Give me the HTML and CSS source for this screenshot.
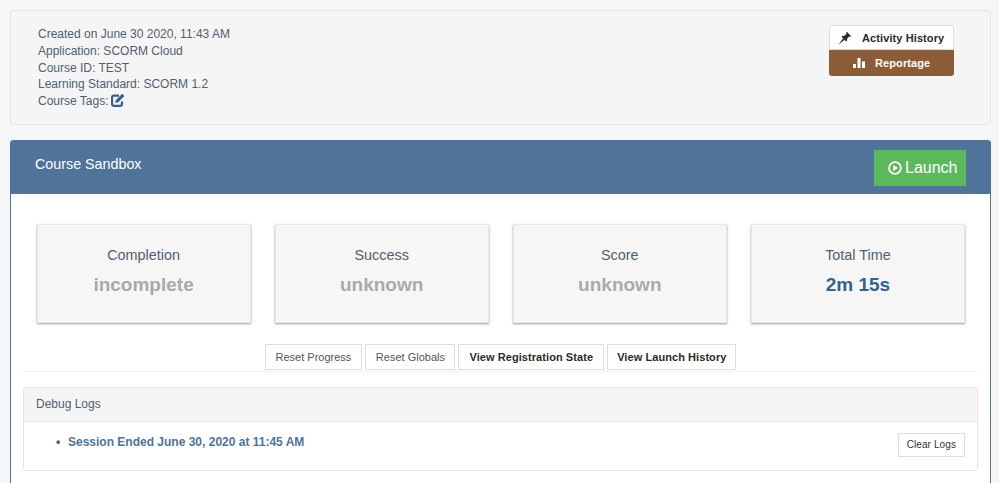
FILE: index.html
```html
<!DOCTYPE html>
<html lang="en">

<head>
    <meta charset="UTF-8">
    <title>Course Sandbox</title>
    <link rel="stylesheet" href="styles.css">
</head>

<body>
    <div class="well">
        <div class="course-info">
            <div>Created on June 30 2020, 11:43 AM</div>
            <div>Application: SCORM Cloud</div>
            <div>Course ID: TEST</div>
            <div>Learning Standard: SCORM 1.2</div>
            <div>Course Tags:
                <svg class="tag-icon" viewBox="0 0 14 14" width="14" height="14">
                    <path d="M11 8.500V11a1.800 1.800 0 0 1-1.800 1.800H2.800A1.800 1.800 0 0 1 1 11V4.500a1.800 1.800 0 0 1 1.800-1.800H8" fill="none" stroke="#34618e" stroke-width="2.300"/>
                    <path d="M4.800 7.200 11.200.8l2.200 2.200L7 9.400l-2.600.4z" fill="#34618e"/>
                </svg>
            </div>
        </div>
        <div class="side-actions">
            <a class="side-btn side-btn-white">
                <svg class="side-icon" viewBox="0 0 14 14" width="14" height="14">
                    <path d="M8.800.8 13.200 5.200 12.400 5.800 11.200 5.500 9.200 7.500 9 9.800 8.200 10.500 3.500 5.800 4.200 5 6.500 4.800 8.500 2.800 8.200 1.600zM.8 13.200 5 7.500 6.500 9z" fill="#2a2a2a"/>
                </svg>
                Activity History
            </a>
            <a class="side-btn side-btn-brown">
                <svg class="side-icon" viewBox="0 0 12 12" width="12" height="12">
                    <path d="M0 7h3v4H0zM4.500 1h3v10h-3zM9 4.500h3V11H9z" fill="#fff"/>
                </svg>
                Reportage
            </a>
        </div>
    </div>

    <div class="panel">
        <div class="panel-head">
            <h2>Course Sandbox</h2>
            <a class="launch-btn">
                <svg viewBox="0 0 14 14" width="14" height="14">
                    <circle cx="7" cy="7" r="5.900" fill="none" stroke="#fff" stroke-width="1.800"/>
                    <path d="M5.200 3.900 10 7l-4.800 3.100z" fill="#fff"/>
                </svg>
                Launch
            </a>
        </div>
        <div class="panel-body">
            <div class="stats">
                <div class="stat">
                    <div class="stat-label">Completion</div>
                    <div class="stat-value">incomplete</div>
                </div>
                <div class="stat">
                    <div class="stat-label">Success</div>
                    <div class="stat-value">unknown</div>
                </div>
                <div class="stat">
                    <div class="stat-label">Score</div>
                    <div class="stat-value">unknown</div>
                </div>
                <div class="stat">
                    <div class="stat-label">Total Time</div>
                    <div class="stat-value stat-value-blue">2m 15s</div>
                </div>
            </div>

            <div class="actions">
                <a class="btn">Reset Progress</a>
                <a class="btn btn-globals">Reset Globals</a>
                <a class="btn btn-bold">View Registration State</a>
                <a class="btn btn-bold btn-history">View Launch History</a>
            </div>

            <div class="logs">
                <div class="logs-head">Debug Logs</div>
                <div class="logs-body">
                    <ul>
                        <li>Session Ended June 30, 2020 at 11:45 AM</li>
                    </ul>
                    <a class="btn btn-clear">Clear Logs</a>
                </div>
            </div>
        </div>
    </div>
</body>

</html>
```

FILE: styles.css
```css
html,
body {
    height: 483px;
    overflow: hidden;
}

body {
    font-family: "Liberation Sans", Arial, sans-serif;
    font-size: 12px;
    background-color: #f4f6f8;
    margin: 0;
    padding: 10px 8px 0 10px;
    box-sizing: border-box;
    color: #4f5f70;
}

.well {
    display: flex;
    justify-content: space-between;
    height: 115px;
    box-sizing: border-box;
    padding: 14px 36px 0 27px;
    background-color: #f5f5f5;
    border: 1px solid #e6e6e6;
    border-radius: 3px;
}

.course-info {
    padding-top: 1px;
    line-height: 16.75px;
}

.tag-icon {
    vertical-align: -2px;
    margin-left: -1px;
}

.side-actions {
    width: 125px;
}

.side-btn {
    display: flex;
    align-items: center;
    font-weight: bold;
    font-size: 11px;
    letter-spacing: 0.1px;
}

.side-btn-white {
    height: 25px;
    box-sizing: border-box;
    background-color: white;
    color: #2a2a2a;
    border: 1px solid #ddd;
    border-radius: 3px 3px 0 0;
    padding-left: 8px;
}

.side-btn-white .side-icon {
    margin-right: 10px;
}

.side-btn-brown {
    height: 26px;
    background-color: #8c5c36;
    color: white;
    border-radius: 0 0 3px 3px;
    padding-left: 24px;
}

.side-btn-brown .side-icon {
    margin-right: 10px;
}

.panel {
    margin-top: 15px;
    background-color: white;
    border: 1px solid #4f7399;
    border-top: none;
    border-bottom: none;
    border-radius: 4px 4px 0 0;
    height: 343px;
}

.panel-head {
    display: flex;
    justify-content: space-between;
    align-items: center;
    height: 54px;
    margin: 0 -1px;
    padding: 0 25px 0 25px;
    box-sizing: border-box;
    background-color: #4f7399;
    border-radius: 4px 4px 0 0;
}

.panel-head h2 {
    margin: -6px 0 0 0;
    font-size: 14.3px;
    font-weight: normal;
    color: white;
}

.launch-btn {
    display: flex;
    align-items: center;
    gap: 3px;
    width: 92px;
    height: 36px;
    margin-top: 1px;
    box-sizing: border-box;
    padding-left: 14px;
    background-color: #5cb85c;
    color: white;
    font-size: 16px;
}

.panel-body {
    padding: 30px 12px 0 12px;
}

.stats {
    display: grid;
    grid-template-columns: repeat(4, 1fr);
    gap: 24px;
    padding: 0 13px 0 13.5px;
}

.stat {
    height: 99px;
    box-sizing: border-box;
    padding-top: 21px;
    text-align: center;
    background-color: #f6f6f6;
    border: 1px solid #e8e8e8;
    box-shadow: 0 1px 2px rgba(0, 0, 0, 0.4);
}

.stat-label {
    font-size: 14.4px;
    line-height: 18px;
}

.stat-value {
    margin-top: 9px;
    font-size: 19px;
    line-height: 24px;
    font-weight: bold;
    color: #aaa;
}

.stat-value-blue {
    color: #34618e;
}

.actions {
    display: flex;
    justify-content: center;
    gap: 3px;
    margin-top: 21px;
    padding: 0 0 1px 0;
    border-bottom: 1px solid #f2f2f2;
}

.btn {
    display: block;
    height: 26px;
    box-sizing: border-box;
    padding: 0 10px;
    line-height: 24px;
    font-size: 11px;
    background-color: white;
    color: #555;
    border: 1px solid #ddd;
}

.btn-globals {
    padding: 0 9.5px;
}

.btn-bold {
    font-weight: bold;
    color: #2a2a2a;
    letter-spacing: 0.07px;
}

.btn-history {
    padding: 0 9px;
}

.logs {
    margin-top: 15px;
    height: 84px;
    box-sizing: border-box;
    border: 1px solid #e6e6e6;
    border-radius: 3px;
}

.logs-head {
    height: 33px;
    padding-left: 12px;
    line-height: 32px;
    background-color: #f5f5f5;
    border-bottom: 1px solid #e6e6e6;
}

.logs-body {
    display: flex;
    justify-content: space-between;
    padding: 12px 12px 0 0;
}

.logs-body ul {
    margin: 0;
    padding-left: 32px;
    list-style: none;
}

.logs-body li {
    font-weight: bold;
    color: #4f7399;
    line-height: 16px;
}

.logs-body li::before {
    content: "•";
    display: inline-block;
    width: 12px;
    color: #4f5f70;
}

.btn-clear {
    font-size: 10px;
    padding: 0 8px;
    height: 24px;
    margin-top: -1px;
    line-height: 22px;
    letter-spacing: 0.1px;
    color: #333;
}
```
